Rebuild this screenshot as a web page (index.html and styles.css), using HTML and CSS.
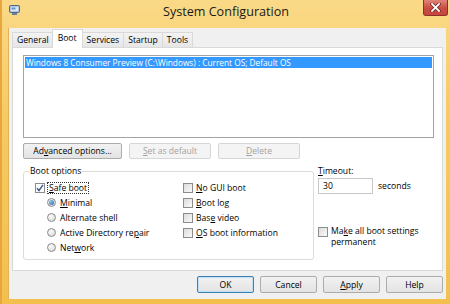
FILE: index.html
```html
<!DOCTYPE html>
<html lang="en">
<head>
  <meta charset="UTF-8">
  <title>System Configuration</title>
  <link rel="stylesheet" href="styles.css">
</head>
<body>
  <div class="window">
    <div class="titlebar">
      <svg class="app-icon" width="11" height="11" viewBox="0 0 11 11">
        <rect x="0.5" y="0.5" width="10" height="7" rx="1" fill="#8da4c0" stroke="#4f6a8f"/>
        <rect x="1.5" y="1.5" width="8" height="5" fill="#dbe8f7"/>
        <rect x="2.5" y="2.5" width="4" height="2" fill="#6d8fbf"/>
        <rect x="3" y="8" width="5" height="2" fill="#6f7f95"/>
      </svg>
      <div class="title">System Configuration</div>
      <div class="close">
        <svg width="11" height="9" viewBox="0 0 11 9">
          <path d="M2 1 L9 8 M9 1 L2 8" stroke="#6b1e1e" stroke-width="3.2" stroke-linecap="square"/>
          <path d="M2 1 L9 8 M9 1 L2 8" stroke="#fff" stroke-width="1.8" stroke-linecap="square"/>
        </svg>
      </div>
    </div>

    <div class="client">
      <div class="tabs">
        <div class="tab">General</div>
        <div class="tab active">Boot</div>
        <div class="tab">Services</div>
        <div class="tab">Startup</div>
        <div class="tab">Tools</div>
      </div>

      <div class="panel">
        <div class="os-list">
          <div class="os-item selected">Windows 8 Consumer Preview (C:\Windows) : Current OS; Default OS</div>
        </div>

        <div class="list-buttons">
          <button class="btn btn-wide">Ad<u>v</u>anced options...</button>
          <button class="btn" disabled><u>S</u>et as default</button>
          <button class="btn" disabled><u>D</u>elete</button>
        </div>

        <div class="options">
          <fieldset class="group">
            <legend>Boot options</legend>
            <div class="group-cols">
              <div class="col col-left">
                <div class="row">
                  <span class="box checked">
                    <svg width="8" height="8" viewBox="0 0 8 8"><path d="M1 4.2 L3 6.5 L7 0.8" fill="none" stroke="#3d5a8a" stroke-width="1.4"/></svg>
                  </span>
                  <span class="focus"><u>S</u>afe boot</span>
                </div>
                <div class="row indent"><span class="radio on"></span><span><u>M</u>inimal</span></div>
                <div class="row indent"><span class="radio"></span><span>Alternate shell</span></div>
                <div class="row indent"><span class="radio"></span><span>Active Directory re<u>p</u>air</span></div>
                <div class="row indent"><span class="radio"></span><span>Net<u>w</u>ork</span></div>
              </div>
              <div class="col">
                <div class="row"><span class="box"></span><span><u>N</u>o GUI boot</span></div>
                <div class="row"><span class="box"></span><span><u>B</u>oot log</span></div>
                <div class="row"><span class="box"></span><span>Bas<u>e</u> video</span></div>
                <div class="row"><span class="box"></span><span><u>O</u>S boot information</span></div>
              </div>
            </div>
          </fieldset>

          <div class="side">
            <div class="side-label"><u>T</u>imeout:</div>
            <div class="timeout">
              <span class="input">30</span>
              <span class="unit">seconds</span>
            </div>
            <div class="permanent">
              <span class="box"></span>
              <span class="permanent-text">Ma<u>k</u>e all boot settings<br>permanent</span>
            </div>
          </div>
        </div>
      </div>

      <div class="dialog-buttons">
        <button class="btn btn-dialog btn-default">OK</button>
        <button class="btn btn-dialog">Cancel</button>
        <button class="btn btn-dialog"><u>A</u>pply</button>
        <button class="btn btn-dialog">Help</button>
      </div>
    </div>
  </div>
</body>
</html>
```

FILE: styles.css
```css
/* GENERAL */
body {
  margin: 0;
  width: 450px;
  height: 304px;
  overflow: hidden;
  font-family: "Open Sans", "Noto Sans", sans-serif;
  font-size: 8.6px;
  color: #000;
}

u {
  text-decoration: underline;
  text-underline-offset: 1px;
}

/* WINDOW FRAME */
.window {
  height: 304px;
  box-sizing: border-box;
  display: flex;
  flex-direction: column;
  background: linear-gradient(#fad987, #f6ca62 40%, #f3c04e);
  border-left: 2px solid #e9a63c;
}

.titlebar {
  height: 28px;
  display: grid;
  grid-template-columns: 1fr auto 1fr;
  align-items: start;
}

.app-icon {
  margin: 5px 0 0 7px;
}

.title {
  font-size: 12.6px;
  line-height: 14px;
  margin-top: 5px;
  color: #1a1a1a;
}

.close {
  justify-self: end;
  width: 25px;
  height: 16px;
  box-sizing: border-box;
  margin-right: 2px;
  border: 1px solid #8f2f2b;
  border-top: none;
  border-radius: 0 0 3px 3px;
  background: linear-gradient(#e0837b, #c94c42 55%, #c7473d);
  display: flex;
  align-items: center;
  justify-content: center;
}

.client {
  height: 271px;
  box-sizing: border-box;
  margin: 0 4px 0 6px;
  background: #f0f0f0;
  border-left: 1px solid #e3b35a;
  padding: 1px 3px 0 3px;
}

/* TABS */
.tabs {
  display: flex;
  align-items: flex-end;
  height: 18px;
  position: relative;
  z-index: 1;
}

.tab {
  height: 15px;
  box-sizing: border-box;
  border: 1px solid #d9d9d9;
  border-bottom: none;
  background: linear-gradient(#f3f3f3, #e6e6e6);
  padding: 0 4px;
  line-height: 14px;
  margin-right: -1px;
}

.tab.active {
  height: 19px;
  margin: 0 -1px -1px -1px;
  padding: 0 5px;
  background: #fff;
  line-height: 17px;
}

.panel {
  height: 224px;
  box-sizing: border-box;
  border: 1px solid #d9d9d9;
  background: #fff;
  padding: 7px 8px 0 10px;
}

/* OS LIST */
.os-list {
  height: 83px;
  box-sizing: border-box;
  border: 1px solid #a0a3a8;
  padding: 1px;
}

.os-item {
  height: 11px;
  line-height: 11px;
  padding-left: 1px;
  white-space: nowrap;
  font-size: 8.3px;
}

.os-item.selected {
  background: #3399ff;
  color: #fff;
}

/* BUTTONS */
.list-buttons {
  display: flex;
  gap: 7px;
  margin-top: 5px;
}

.btn {
  height: 16px;
  width: 82px;
  box-sizing: border-box;
  border: 1px solid #acacac;
  border-radius: 2px;
  background: linear-gradient(#f2f2f2, #e3e3e3);
  font: inherit;
  color: #000;
  padding: 0;
  line-height: 14px;
}

.btn-wide {
  width: 99px;
}

.btn:disabled {
  color: #a3a3a3;
  border-color: #d6d6d6;
  background: #f4f4f4;
}

/* BOOT OPTIONS */
.options {
  display: flex;
  gap: 4px;
  margin-top: 7px;
}

.group {
  width: 291px;
  box-sizing: border-box;
  margin: 0;
  border: 1px solid #dcdcdc;
  border-radius: 3px;
  padding: 3px 0 4px 11px;
  min-width: 0;
}

.group legend {
  margin-left: -6px;
  padding: 0 1px;
  line-height: 11px;
}

.group-cols {
  display: flex;
}

.col-left {
  width: 148px;
}

.row {
  height: 15px;
  display: flex;
  align-items: center;
  white-space: nowrap;
}

.row.indent {
  padding-left: 12px;
}

.box {
  width: 10px;
  height: 10px;
  box-sizing: border-box;
  border: 1px solid #8c8c8c;
  background: linear-gradient(135deg, #dcdcdc, #fafafa);
  margin-right: 3px;
  flex: none;
  display: flex;
  align-items: center;
  justify-content: center;
}

.box.checked {
  background: #fdfdfd;
}

.radio {
  width: 9px;
  height: 9px;
  box-sizing: border-box;
  border: 1px solid #8c8c8c;
  border-radius: 50%;
  background: radial-gradient(circle at 40% 35%, #fafafa, #d4d4d4);
  margin-right: 4px;
  flex: none;
  display: flex;
  align-items: center;
  justify-content: center;
}

.radio.on::after {
  content: "";
  width: 5px;
  height: 5px;
  border-radius: 50%;
  background: radial-gradient(circle at 35% 35%, #8ec3f5, #1f5f9e);
}

.focus {
  outline: 1px dotted #333;
  outline-offset: 0;
  padding: 0 1px;
  line-height: 10px;
}

/* TIMEOUT COLUMN */
.side {
  display: flex;
  flex-direction: column;
}

.side-label {
  line-height: 11px;
}

.timeout {
  display: flex;
  align-items: center;
  margin-top: 1px;
}

.input {
  width: 55px;
  height: 16px;
  box-sizing: border-box;
  border: 1px solid #c8c8c8;
  line-height: 14px;
  padding-left: 4px;
  background: #fff;
}

.unit {
  margin-left: 5px;
}

.permanent {
  display: flex;
  align-items: flex-start;
  margin-top: 33px;
}

.permanent-text {
  line-height: 11px;
  margin-top: -1px;
}

/* DIALOG BUTTONS */
.dialog-buttons {
  display: flex;
  justify-content: flex-end;
  gap: 6px;
  margin-top: 5px;
}

.btn-dialog {
  width: 57px;
  height: 17px;
}

.btn-default {
  border-color: #3c7fb1;
  box-shadow: inset 0 0 0 1px #bfe0f7;
}
```
